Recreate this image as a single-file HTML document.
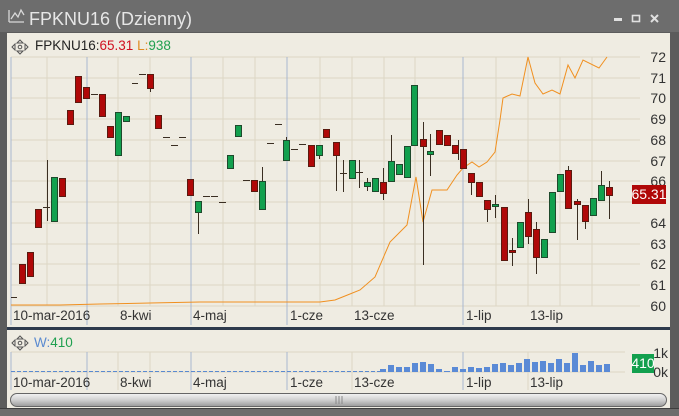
<!DOCTYPE html><html><head><meta charset="utf-8"><style>
html,body{margin:0;padding:0;width:679px;height:416px;overflow:hidden;background:#6b6b6b}
svg{display:block}
text{font-family:"Liberation Sans",sans-serif}
</style></head><body>
<svg width="679" height="416" viewBox="0 0 679 416" xmlns="http://www.w3.org/2000/svg">
<rect width="679" height="416" fill="#6d6d6d"/>
<rect x="0" y="32" width="679" height="384" fill="#5c5c5c"/>
<rect x="7" y="33" width="663" height="375" fill="#efece2"/>
<!-- title -->
<path d="M9 22 L9 10 M9 22 L24 22 M11 19 L15 13 L18 17 L21 10 L24 15" stroke="#d8d8d8" stroke-width="1.3" fill="none"/>
<text x="29" y="25" font-size="18" fill="#e6e6e6">FPKNU16 (Dzienny)</text>
<rect x="614" y="18" width="8" height="3" fill="#e0e0e0"/>
<rect x="632.5" y="15.5" width="7" height="6" fill="none" stroke="#e0e0e0" stroke-width="1.6"/>
<path d="M651 15 L658 22 M658 15 L651 22" stroke="#e0e0e0" stroke-width="2"/>
<!-- grid -->
<g stroke="#dcd6c4" stroke-width="1">
<line x1="11" y1="57" x2="640" y2="57"/><line x1="11" y1="78" x2="640" y2="78"/><line x1="11" y1="98" x2="640" y2="98"/><line x1="11" y1="119" x2="640" y2="119"/><line x1="11" y1="140" x2="640" y2="140"/><line x1="11" y1="161" x2="640" y2="161"/><line x1="11" y1="181" x2="640" y2="181"/><line x1="11" y1="202" x2="640" y2="202"/><line x1="11" y1="223" x2="640" y2="223"/><line x1="11" y1="244" x2="640" y2="244"/><line x1="11" y1="264" x2="640" y2="264"/><line x1="11" y1="285" x2="640" y2="285"/><line x1="11" y1="306" x2="640" y2="306"/>
<line x1="11" y1="352" x2="625" y2="352"/><line x1="11" y1="372" x2="625" y2="372"/>
<line x1="47" y1="57" x2="47" y2="306"/><line x1="118" y1="57" x2="118" y2="306"/><line x1="150" y1="57" x2="150" y2="306"/><line x1="223" y1="57" x2="223" y2="306"/><line x1="255" y1="57" x2="255" y2="306"/><line x1="320" y1="57" x2="320" y2="306"/><line x1="352" y1="57" x2="352" y2="306"/><line x1="384" y1="57" x2="384" y2="306"/><line x1="415" y1="57" x2="415" y2="306"/><line x1="496" y1="57" x2="496" y2="306"/><line x1="528" y1="57" x2="528" y2="306"/><line x1="560" y1="57" x2="560" y2="306"/><line x1="592" y1="57" x2="592" y2="306"/>
<line x1="118" y1="352" x2="118" y2="390"/><line x1="150" y1="352" x2="150" y2="390"/><line x1="352" y1="352" x2="352" y2="390"/><line x1="528" y1="352" x2="528" y2="390"/>
</g>
<g stroke="#a8b8d0" stroke-width="1">
<line x1="11" y1="57" x2="11" y2="325"/><line x1="87" y1="57" x2="87" y2="325"/><line x1="191" y1="57" x2="191" y2="325"/><line x1="287" y1="57" x2="287" y2="325"/><line x1="463" y1="57" x2="463" y2="325"/>
<line x1="11" y1="352" x2="11" y2="390"/><line x1="87" y1="352" x2="87" y2="390"/><line x1="191" y1="352" x2="191" y2="390"/><line x1="287" y1="352" x2="287" y2="390"/><line x1="463" y1="352" x2="463" y2="390"/>
</g>
<!-- legend -->
<g fill="none" stroke="#555" stroke-width="1">
<path d="M17 43 L20 40 L23 43 Z M17 51 L20 54 L23 51 Z M15 44 L12 47 L15 50 Z M25 44 L28 47 L25 50 Z"/><circle cx="20" cy="47" r="1.8"/>
<path d="M17 339 L20 336 L23 339 Z M17 347 L20 350 L23 347 Z M15 340 L12 343 L15 346 Z M25 340 L28 343 L25 346 Z"/><circle cx="20" cy="343" r="1.8"/>
</g>
<text x="35" y="50" font-size="13.5" fill="#222">FPKNU16:<tspan fill="#d01020">65.31</tspan> <tspan fill="#e08a20">L:</tspan><tspan fill="#20a050">938</tspan></text>
<text x="34" y="347" font-size="13.5" fill="#5a8ad0">W:<tspan fill="#20a050">410</tspan></text>
<!-- orange line -->
<polyline fill="none" stroke="#f09020" stroke-width="1" points="11,305 60,305 100,304 150,303 200,302 250,302 320,302 335,300 345,296 360,290 375,277 390,242 407,225 416,177 423,222 432,190 447,190 457,175 463,168 472,162 479,167 487,162 495,152 500,120 503,98 512,94 520,96 528,57 535,83 543,94 552,90 560,94 568,65 575,78 583,60 599,68 607,57"/>
<!-- candles -->
<g stroke="#3a2e22" stroke-width="1">
<line x1="47.5" y1="160" x2="47.5" y2="221"/><line x1="198.5" y1="201" x2="198.5" y2="234"/><line x1="262.5" y1="167" x2="262.5" y2="209"/><line x1="286.5" y1="137" x2="286.5" y2="160"/><line x1="319.5" y1="145" x2="319.5" y2="159"/><line x1="150.5" y1="74" x2="150.5" y2="92"/><line x1="336.5" y1="142" x2="336.5" y2="191"/>
<line x1="343.5" y1="160" x2="343.5" y2="192"/><line x1="359.5" y1="160" x2="359.5" y2="188"/><line x1="367.5" y1="178" x2="367.5" y2="191"/><line x1="383.5" y1="168" x2="383.5" y2="200"/><line x1="391.5" y1="135" x2="391.5" y2="181"/><line x1="423.5" y1="122" x2="423.5" y2="265"/><line x1="430.5" y1="134" x2="430.5" y2="176"/><line x1="471.5" y1="173" x2="471.5" y2="195"/><line x1="487.5" y1="200" x2="487.5" y2="222"/><line x1="495.5" y1="195" x2="495.5" y2="218"/><line x1="512.5" y1="238" x2="512.5" y2="266"/><line x1="528.5" y1="199" x2="528.5" y2="244"/><line x1="536.5" y1="222" x2="536.5" y2="274"/><line x1="568.5" y1="166" x2="568.5" y2="208"/><line x1="577.5" y1="199" x2="577.5" y2="240"/><line x1="585.5" y1="205" x2="585.5" y2="229"/><line x1="601.5" y1="171" x2="601.5" y2="200"/><line x1="609.5" y1="181" x2="609.5" y2="219"/><line x1="458.5" y1="140" x2="458.5" y2="160"/>
<line x1="11" y1="297.5" x2="17" y2="297.5"/><line x1="43" y1="207.5" x2="50" y2="207.5"/><line x1="91" y1="94.5" x2="98" y2="94.5"/><line x1="132" y1="83.5" x2="138" y2="83.5"/><line x1="139" y1="74.5" x2="146" y2="74.5"/><line x1="163" y1="137.5" x2="170" y2="137.5"/><line x1="171" y1="145.5" x2="178" y2="145.5"/><line x1="179" y1="137.5" x2="186" y2="137.5"/><line x1="203" y1="196.5" x2="210" y2="196.5"/><line x1="211" y1="196.5" x2="218" y2="196.5"/><line x1="219" y1="202.5" x2="226" y2="202.5"/><line x1="243" y1="180.5" x2="250" y2="180.5"/><line x1="267" y1="143.5" x2="274" y2="143.5"/><line x1="275" y1="124.5" x2="282" y2="124.5"/><line x1="291" y1="149.5" x2="298" y2="149.5"/><line x1="299" y1="144.5" x2="306" y2="144.5"/><line x1="340" y1="173.5" x2="347" y2="173.5"/><line x1="356" y1="172.5" x2="363" y2="172.5"/>
</g>
<g fill="#b00808" stroke="#5a1a10" stroke-width="1">
<rect x="19.5" y="264.5" width="6" height="19"/><rect x="27.5" y="252.5" width="6" height="24"/><rect x="35.5" y="209.5" width="6" height="18"/><rect x="59.5" y="178.5" width="6" height="18"/>
<rect x="67.5" y="110.5" width="6" height="14"/><rect x="75.5" y="76.5" width="6" height="26"/><rect x="83.5" y="87.5" width="6" height="11"/><rect x="99.5" y="94.5" width="6" height="22"/><rect x="107.5" y="126.5" width="6" height="11"/><rect x="147.5" y="74.5" width="6" height="14"/><rect x="155.5" y="115.5" width="6" height="13"/>
<rect x="187.5" y="179.5" width="6" height="16"/><rect x="251.5" y="180.5" width="6" height="11"/><rect x="308.5" y="145.5" width="6" height="21"/><rect x="323.5" y="129.5" width="6" height="8"/><rect x="333.5" y="142.5" width="6" height="13"/>
<rect x="380.5" y="182.5" width="6" height="11"/><rect x="420.5" y="139.5" width="6" height="7"/><rect x="436.5" y="130.5" width="6" height="14"/><rect x="444.5" y="135.5" width="6" height="10"/><rect x="452.5" y="145.5" width="6" height="8"/><rect x="460.5" y="149.5" width="6" height="19"/><rect x="468.5" y="173.5" width="6" height="9"/><rect x="476.5" y="182.5" width="6" height="14"/><rect x="484.5" y="200.5" width="6" height="9"/>
<rect x="501.5" y="207.5" width="6" height="53"/><rect x="509.5" y="250.5" width="6" height="2"/><rect x="525.5" y="212.5" width="6" height="24"/><rect x="533.5" y="229.5" width="6" height="28"/><rect x="565.5" y="170.5" width="6" height="38"/><rect x="574.5" y="201.5" width="6" height="3"/><rect x="582.5" y="205.5" width="6" height="16"/><rect x="606.5" y="187.5" width="6" height="8"/>
</g>
<g fill="#12a04e" stroke="#1e4a2c" stroke-width="1">
<rect x="51.5" y="177.5" width="6" height="44"/><rect x="115.5" y="112.5" width="6" height="43"/><rect x="123.5" y="116.5" width="6" height="5"/><rect x="195.5" y="201.5" width="6" height="11"/><rect x="227.5" y="155.5" width="6" height="13"/><rect x="235.5" y="125.5" width="6" height="11"/><rect x="259.5" y="181.5" width="6" height="28"/><rect x="283.5" y="140.5" width="6" height="20"/><rect x="316.5" y="145.5" width="6" height="10"/>
<rect x="349.5" y="160.5" width="6" height="18"/><rect x="364.5" y="182.5" width="6" height="4"/><rect x="372.5" y="178.5" width="6" height="13"/><rect x="388.5" y="161.5" width="6" height="20"/><rect x="396.5" y="164.5" width="6" height="10"/><rect x="404.5" y="146.5" width="6" height="31"/><rect x="411.5" y="85.5" width="6" height="60"/><rect x="427.5" y="151.5" width="6" height="3"/><rect x="492.5" y="204.5" width="6" height="2"/>
<rect x="517.5" y="222.5" width="6" height="25"/><rect x="541.5" y="239.5" width="6" height="18"/><rect x="549.5" y="192.5" width="6" height="40"/><rect x="557.5" y="174.5" width="6" height="17"/><rect x="590.5" y="198.5" width="6" height="17"/><rect x="598.5" y="185.5" width="6" height="15"/>
</g>
<!-- price axis -->
<g font-size="14" fill="#333" text-anchor="end">
<text x="666" y="62">72</text><text x="666" y="83">71</text><text x="666" y="103">70</text><text x="666" y="124">69</text><text x="666" y="145">68</text><text x="666" y="166">67</text><text x="666" y="186">66</text><text x="666" y="228">64</text><text x="666" y="249">63</text><text x="666" y="269">62</text><text x="666" y="290">61</text><text x="666" y="311">60</text>
<text x="668" y="358">1k</text><text x="668" y="377">0k</text>
</g>
<rect x="632" y="185" width="34" height="19" fill="#b00808"/>
<text x="649" y="199" font-size="14" fill="#fff" text-anchor="middle">65.31</text>
<!-- dates -->
<g font-size="13.5" fill="#333">
<text x="13" y="320">10-mar-2016</text><text x="120" y="320">8-kwi</text><text x="193" y="320">4-maj</text><text x="290" y="320">1-cze</text><text x="354" y="320">13-cze</text><text x="466" y="320">1-lip</text><text x="530" y="320">13-lip</text>
<text x="13" y="387">10-mar-2016</text><text x="120" y="387">8-kwi</text><text x="193" y="387">4-maj</text><text x="290" y="387">1-cze</text><text x="354" y="387">13-cze</text><text x="466" y="387">1-lip</text><text x="530" y="387">13-lip</text>
</g>
<rect x="7" y="327" width="663" height="3" fill="#2e3a4c"/>
<!-- volume -->
<line x1="11" y1="371.5" x2="380" y2="371.5" stroke="#5a8ad0" stroke-width="1" stroke-dasharray="4,2"/>
<g fill="#5a8ad6">
<rect x="380" y="369" width="6" height="3"/><rect x="388" y="365" width="6" height="7"/><rect x="396" y="367" width="6" height="5"/><rect x="404" y="367" width="6" height="5"/><rect x="412" y="363" width="6" height="9"/><rect x="420" y="362" width="6" height="10"/><rect x="428" y="364" width="6" height="8"/><rect x="436" y="369" width="6" height="3"/><rect x="444" y="371" width="6" height="1"/><rect x="452" y="367" width="6" height="5"/><rect x="460" y="369" width="6" height="3"/><rect x="468" y="367" width="6" height="5"/><rect x="476" y="368" width="6" height="4"/><rect x="484" y="367" width="6" height="5"/><rect x="492" y="364" width="6" height="8"/><rect x="500" y="363" width="6" height="9"/><rect x="508" y="365" width="6" height="7"/><rect x="516" y="363" width="6" height="9"/><rect x="524" y="359" width="6" height="13"/><rect x="532" y="362" width="6" height="10"/><rect x="540" y="361" width="6" height="11"/><rect x="548" y="363" width="6" height="9"/><rect x="556" y="359" width="6" height="13"/><rect x="564" y="363" width="6" height="9"/><rect x="572" y="353" width="6" height="19"/><rect x="580" y="365" width="6" height="7"/><rect x="588" y="361" width="6" height="11"/><rect x="596" y="365" width="6" height="7"/><rect x="604" y="364" width="6" height="8"/>
</g>
<rect x="632" y="354" width="22" height="19" fill="#12a04e"/>
<text x="643" y="368" font-size="14" fill="#fff" text-anchor="middle">410</text>
<!-- scrollbar -->
<defs><linearGradient id="sb" x1="0" y1="0" x2="0" y2="1"><stop offset="0" stop-color="#f4f4f4"/><stop offset="0.5" stop-color="#d0d0d0"/><stop offset="1" stop-color="#9a9a9a"/></linearGradient></defs>
<rect x="10.5" y="393.5" width="656" height="13" rx="6.5" fill="url(#sb)" stroke="#666"/>
<path d="M336 396 V404 M339 396 V404 M342 396 V404" stroke="#888"/>
<rect x="0" y="408" width="679" height="8" fill="#6d6d6d"/>
<line x1="0" y1="408.5" x2="679" y2="408.5" stroke="#3e3e3e"/>
</svg>
</body></html>
